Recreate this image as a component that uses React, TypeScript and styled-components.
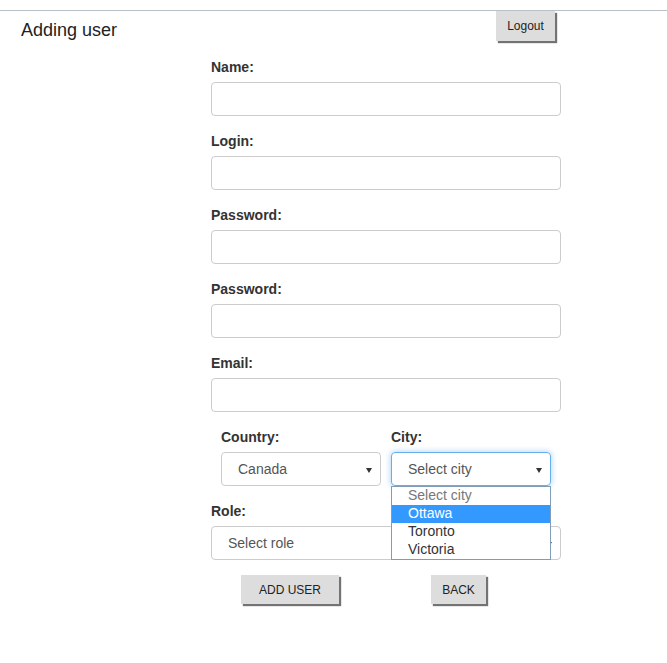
import React from "react";
import styled, { createGlobalStyle } from "styled-components";

const Global = createGlobalStyle`
  html, body { margin: 0; padding: 0; background: #fff; }
  body { font-family: "Liberation Sans", Arial, sans-serif; color: #333; }
  * { box-sizing: border-box; }
`;

const Page = styled.div`
  padding-top: 10px;
  width: 667px;
  min-height: 663px;
`;

const Header = styled.header`
  border-top: 1px solid #b9c1c8;
  display: flex;
  align-items: flex-start;
  height: 47px;
`;

const Title = styled.h1`
  margin: 0;
  padding: 8px 0 0 21px;
  font-size: 18px;
  font-weight: normal;
  line-height: 22px;
  color: #222;
  width: 496px;
`;

const GreyButton = styled.button<{ $w: number; $h: number }>`
  width: ${(p) => p.$w}px;
  height: ${(p) => p.$h}px;
  padding: 0;
  border: none;
  background: #dddddd;
  box-shadow: 2px 2px 1px rgba(0, 0, 0, 0.55);
  font-family: "Liberation Sans", Arial, sans-serif;
  font-size: 12px;
  color: #222;
  cursor: pointer;
`;

const LogoutButton = styled(GreyButton)`
  margin-left: 0;
`;

const Form = styled.form`
  margin-left: 211px;
  width: 350px;
  display: flex;
  flex-direction: column;
`;

const Field = styled.div<{ $indent?: number }>`
  display: flex;
  flex-direction: column;
  padding-left: ${(p) => p.$indent ?? 0}px;
  margin-bottom: 15px;
  position: relative;
`;

const Label = styled.label`
  font-weight: bold;
  font-size: 14px;
  line-height: 20px;
  height: 20px;
  margin-bottom: 5px;
  color: #333;
`;

const Input = styled.input`
  width: 350px;
  height: 34px;
  border: 1px solid #ccc;
  border-radius: 4px;
  padding: 6px 12px;
  font-size: 14px;
  font-family: "Liberation Sans", Arial, sans-serif;
  outline: none;
`;

const Row = styled.div`
  display: grid;
  grid-template-columns: 170px 170px;
`;

const SelectBox = styled.div<{ $w: number; $focus?: boolean }>`
  width: ${(p) => p.$w}px;
  height: 34px;
  border: 1px solid ${(p) => (p.$focus ? "#66afe9" : "#ccc")};
  border-radius: 4px;
  box-shadow: ${(p) =>
    p.$focus ? "0 0 6px rgba(102, 175, 233, 0.6)" : "none"};
  display: flex;
  align-items: center;
  padding-left: 16px;
  font-size: 14px;
  color: #555;
  position: relative;
`;

const Caret = styled.span`
  position: absolute;
  right: 8px;
  top: 15px;
  width: 0;
  height: 0;
  border-left: 3.5px solid transparent;
  border-right: 3.5px solid transparent;
  border-top: 5px solid #333;
`;

const DropList = styled.ul`
  position: absolute;
  left: 10px;
  top: 59px;
  width: 160px;
  margin: 0;
  padding: 0;
  list-style: none;
  border: 1px solid #7f9db9;
  background: #fff;
  z-index: 5;
`;

const Option = styled.li<{ $sel?: boolean; $muted?: boolean }>`
  height: 18px;
  line-height: 17px;
  padding-left: 16px;
  font-size: 14px;
  background: ${(p) => (p.$sel ? "#3399ff" : "#fff")};
  color: ${(p) => (p.$sel ? "#fff" : p.$muted ? "#777" : "#333")};
`;

const Actions = styled.div`
  display: flex;
  padding-left: 30px;
  gap: 92px;
`;

export default function App() {
  return (
    <Page>
      <Global />
      <Header>
        <Title>Adding user</Title>
        <LogoutButton $w={59} $h={30} type="button">
          Logout
        </LogoutButton>
      </Header>
      <Form>
        {["Name:", "Login:", "Password:", "Password:", "Email:"].map((l, i) => (
          <Field key={i}>
            <Label>{l}</Label>
            <Input type={l.startsWith("Password") ? "password" : "text"} />
          </Field>
        ))}
        <Row>
          <Field $indent={10}>
            <Label>Country:</Label>
            <SelectBox $w={160}>
              Canada
              <Caret />
            </SelectBox>
          </Field>
          <Field $indent={10}>
            <Label>City:</Label>
            <SelectBox $w={160} $focus>
              Select city
              <Caret />
            </SelectBox>
            <DropList>
              <Option $muted>Select city</Option>
              <Option $sel>Ottawa</Option>
              <Option>Toronto</Option>
              <Option>Victoria</Option>
            </DropList>
          </Field>
        </Row>
        <Field>
          <Label>Role:</Label>
          <SelectBox $w={350}>
            Select role
            <Caret />
          </SelectBox>
        </Field>
        <Actions>
          <GreyButton $w={98} $h={29} type="button">
            ADD USER
          </GreyButton>
          <GreyButton $w={55} $h={29} type="button">
            BACK
          </GreyButton>
        </Actions>
      </Form>
    </Page>
  );
}
